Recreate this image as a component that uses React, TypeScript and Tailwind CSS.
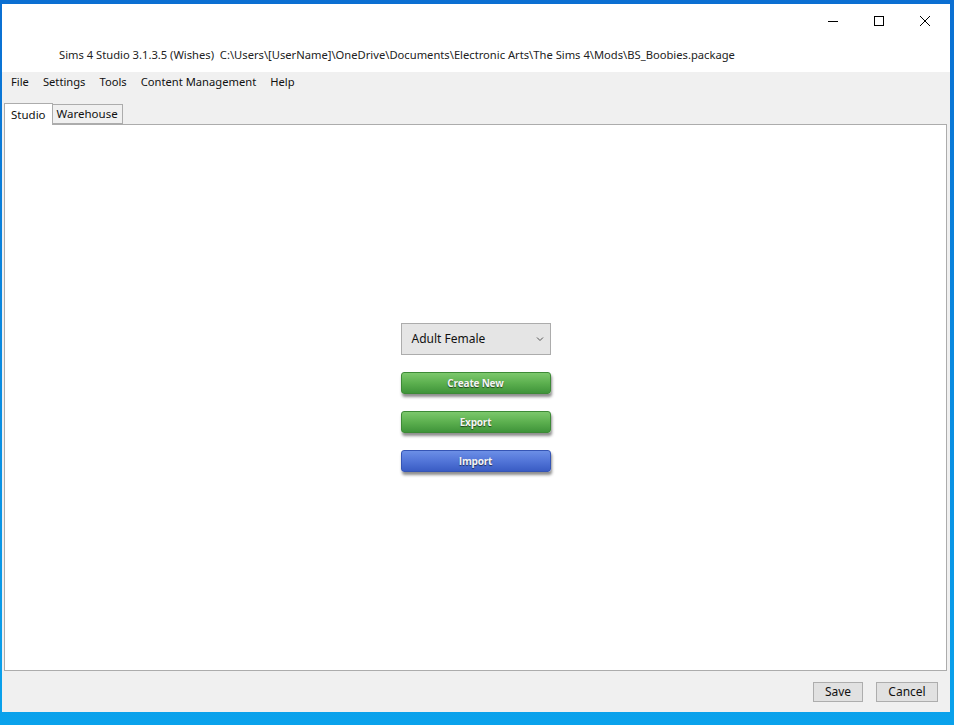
import React from "react";

const menus = ["File", "Settings", "Tools", "Content Management", "Help"];

function ActionButton({ label, tone }: { label: string; tone: "green" | "blue" }) {
  const bg =
    tone === "green"
      ? "bg-gradient-to-b from-[#7cc86c] via-[#5cb04f] to-[#3f943a] border-[#3d8a36]"
      : "bg-gradient-to-b from-[#6c8fe6] via-[#5275d8] to-[#3a5cc4] border-[#3555b5]";
  return (
    <button
      className={`w-[150px] h-[22px] rounded-[3px] border ${bg} text-[#f4f4f4] text-[10px] font-bold tracking-[-0.2px] shadow-[1px_3px_3px_rgba(0,0,0,0.45)] [text-shadow:0_1px_1px_rgba(0,0,0,0.6)]`}
      style={{ fontFamily: "'Open Sans', sans-serif" }}
    >
      {label}
    </button>
  );
}

export default function App() {
  return (
    <div
      className="w-[954px] h-[725px] bg-gradient-to-b from-[#0b6fd2] via-[#0a8ae0] to-[#0aa2ec] pt-[4px] pl-[2px] pr-[4px] pb-[13px] overflow-hidden"
      style={{ fontFamily: "'Noto Sans', 'Liberation Sans', sans-serif" }}
    >
      <div className="w-full h-full bg-white flex flex-col text-[#111]">
        {/* title bar */}
        <div className="h-[34px] flex justify-end items-center pr-[2px]">
          <div className="w-[46px] flex justify-center">
            <div className="w-[10px] h-px bg-black" />
          </div>
          <div className="w-[46px] flex justify-center">
            <div className="w-[10px] h-[10px] border border-black" />
          </div>
          <div className="w-[46px] flex justify-center">
            <svg width="12" height="12" viewBox="0 0 12 12">
              <path d="M1 1L11 11M11 1L1 11" stroke="#000" strokeWidth="1" />
            </svg>
          </div>
        </div>
        <div className="h-[34px] flex items-center pl-[57px] text-[11.2px] text-[#222]">
          <span>Sims 4 Studio 3.1.3.5 (Wishes)&nbsp;&nbsp;C:\Users\[UserName]\OneDrive\Documents\Electronic Arts\The Sims 4\Mods\BS_Boobies.package</span>
        </div>
        {/* menu bar */}
        <div className="h-[30px] bg-[#f0f0f0] flex items-center pl-[2px] pb-[10px] text-[11.2px]">
          {menus.map((m) => (
            <span key={m} className="px-[7px]">
              {m}
            </span>
          ))}
        </div>
        {/* tabs */}
        <div className="bg-[#f0f0f0] flex-1 flex flex-col px-[2px]">
          <div className="h-[22px] flex items-end text-[11.5px]">
            <div className="h-[22px] px-[6px] bg-white border border-b-0 border-[#acacac] flex items-center relative top-px z-10">
              Studio
            </div>
            <div className="h-[20px] px-[4px] bg-[#f0f0f0] border border-l-0 border-[#acacac] flex items-center">
              Warehouse
            </div>
          </div>
          <div className="h-[547px] bg-white border border-[#acacac] flex flex-col items-center pt-[198px] mr-[1px]">
            <div className="w-[150px] h-[32px] bg-[#e5e5e5] border border-[#acacac] flex items-center justify-between pl-[10px] pr-[6px] text-[12px]">
              <span>Adult Female</span>
              <svg width="8" height="6" viewBox="0 0 8 6">
                <path d="M1 1.5L4 4.5L7 1.5" fill="none" stroke="#555" strokeWidth="1" />
              </svg>
            </div>
            <div className="flex flex-col gap-[17px] mt-[17px]">
              <ActionButton label="Create New" tone="green" />
              <ActionButton label="Export" tone="green" />
              <ActionButton label="Import" tone="blue" />
            </div>
          </div>
          {/* footer */}
          <div className="flex-1 flex justify-end items-start pt-[11px] pr-[10px] gap-[13px] text-[12px]">
            <button className="w-[50px] h-[20px] bg-[#e1e1e1] border border-[#adadad]">Save</button>
            <button className="w-[62px] h-[20px] bg-[#e1e1e1] border border-[#adadad]">Cancel</button>
          </div>
        </div>
      </div>
    </div>
  );
}
